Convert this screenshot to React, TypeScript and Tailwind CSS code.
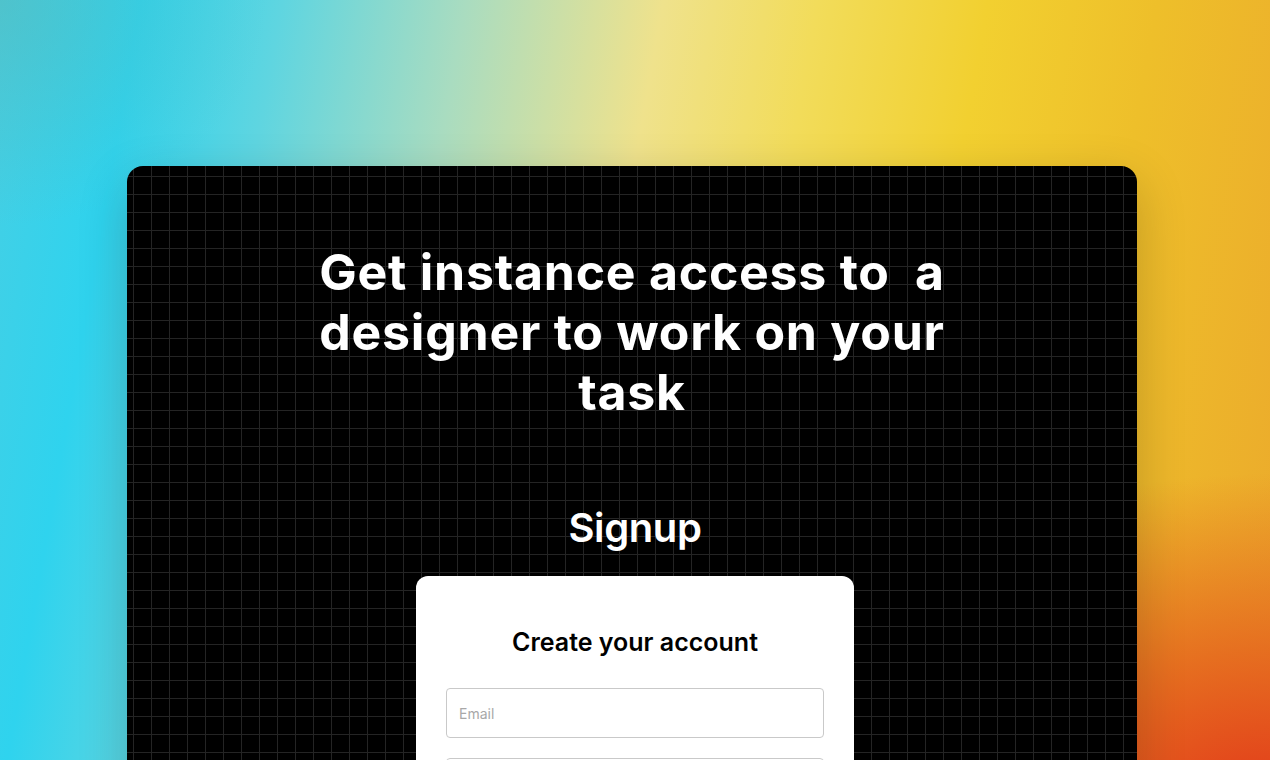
const font = { fontFamily: "Inter, 'Noto Sans', sans-serif" };

export default function App() {
  return (
    <div
      className="min-h-screen w-full overflow-hidden pt-[166px] pl-[127px] pr-[133px] [background-image:radial-gradient(ellipse_55%_55%_at_100%_100%,#e2381a_0%,rgba(228,90,28,0.75)_35%,rgba(232,140,40,0)_75%),radial-gradient(ellipse_30%_40%_at_0%_0%,rgba(90,180,175,0.45)_0%,rgba(90,180,175,0)_70%),linear-gradient(100deg,#46cfe4_0%,#2fd3ee_10%,#5fd5e0_20%,#a9dcc0_33%,#efe28c_47%,#f2dc5a_58%,#f2d030_70%,#eebf2a_82%,#eba82c_100%)]"
      style={font}
    >
      <div className="h-[640px] rounded-2xl bg-black shadow-[0_16px_50px_rgba(0,0,0,0.2)] [background-image:linear-gradient(to_right,#242424_1px,transparent_1px),linear-gradient(to_bottom,#242424_1px,transparent_1px)] [background-size:18px_18px] [background-position:6px_10px]">
        <div className="flex flex-col items-center pt-[76px]">
          <h1 className="text-center text-[50px] font-bold leading-[60px] tracking-[0.015em] text-white">
            Get instance access to&nbsp; a
            <br />
            designer to work on your
            <br />
            task
          </h1>

          <div className="flex flex-col items-center pl-[6px]">
            <h2 className="mt-[82px] text-[40px] font-semibold leading-[48px] tracking-[-0.01em] text-white">
              Signup
            </h2>

            <div className="mt-[24px] w-[438px] rounded-xl bg-white px-[30px] pt-[50px] pb-10">
              <h3 className="text-center text-[25px] font-semibold leading-[32px] text-black">
                Create your account
              </h3>
              <div className="mt-[30px] flex flex-col gap-5">
                <input
                  type="email"
                  placeholder="Email"
                  className="h-[50px] w-full rounded border border-[#c9c9c9] px-3 text-[14px] text-gray-800 placeholder:text-[#a8a8a8] outline-none"
                />
                <input
                  type="password"
                  placeholder="Password"
                  className="h-[50px] w-full rounded border border-[#c9c9c9] px-3 text-[14px] text-gray-800 placeholder:text-[#a8a8a8] outline-none"
                />
              </div>
            </div>
          </div>
        </div>
      </div>
    </div>
  );
}
